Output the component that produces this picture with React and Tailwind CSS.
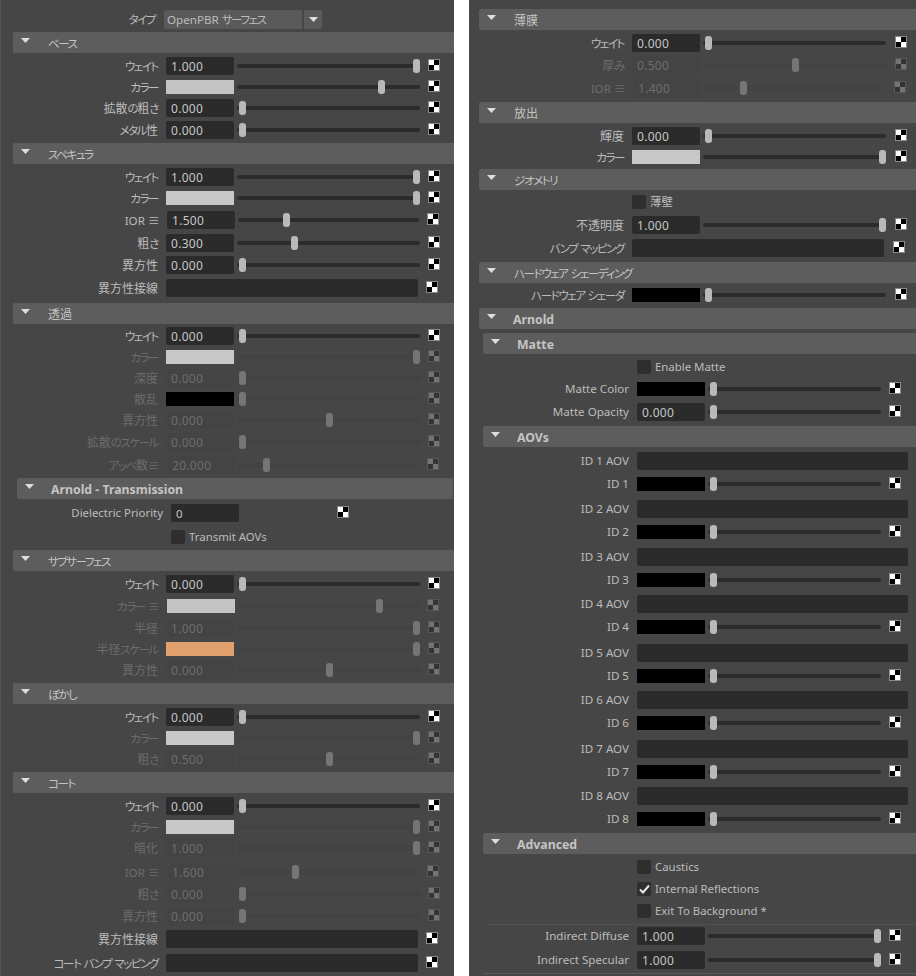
import React from 'react';

const FONT = 'font-["Noto_Sans","Noto_Sans_CJK_JP",sans-serif] [font-feature-settings:"palt"]';

const layouts = {
  left: { label: 'w-[158px]', slider: 183, sliderW: 'w-[183px]', sliderShift: 'w-[181px]', long: 'w-[252px]', check: 'ml-[8px]' },
  right: { label: 'w-[155px]', slider: 183, sliderW: 'w-[183px]', sliderShift: 'w-[181px]', long: 'w-[252px]', check: 'ml-[9px]' },
  arnold: { label: 'w-[160px]', slider: 173, sliderW: 'w-[173px]', sliderShift: 'w-[171px]', long: 'w-[271px]', check: 'ml-[8px]' },
};

// kana and latin runs are narrower than the kanji in the original UI font
const Txt = ({ children }) =>
  String(children)
    .split(/([ぁ-ゖァ-ヿ≡]+|[A-Za-z0-9 -]+)/)
    .filter(Boolean)
    .map((run, i) =>
      /^[ぁ-ゖァ-ヿ≡]/.test(run) ? (
        <span key={i} className="text-[11.5px] tracking-[-1.4px]">{run}</span>
      ) : /^[A-Za-z0-9 -]/.test(run) ? (
        <span key={i} className="text-[11.6px]">{run}</span>
      ) : (
        <span key={i}>{run}</span>
      )
    );

const Triangle = () => (
  <svg width="9" height="5" viewBox="0 0 9 5" className="shrink-0">
    <polygon points="0,0 9,0 4.5,5" fill="#dedede" />
  </svg>
);

const Checker = ({ off }) => (
  <svg width="12" height="12" viewBox="0 0 12 12" className={`shrink-0 mb-[2px] ${off ? 'opacity-25' : ''}`}>
    <rect width="12" height="12" fill="#8a8a8a" />
    <rect x="1" y="1" width="5" height="5" fill="#fff" />
    <rect x="6" y="1" width="5" height="5" fill="#000" />
    <rect x="1" y="6" width="5" height="5" fill="#000" />
    <rect x="6" y="6" width="5" height="5" fill="#fff" />
  </svg>
);

const Header = ({ title, bold, cls = 'ml-[13px]' }) => (
  <div className={`h-[21px] my-[2px] pl-2 flex items-center shrink-0 rounded-tl-[2px] rounded-bl-[2px] bg-[#5d5d5d] text-[#c4c4c4] ${bold ? 'gap-[17px]' : 'gap-[18px]'} ${cls}`}>
    <span className="mb-[5px]"><Triangle /></span>
    {bold ? (
      <span className="pt-[3px] font-bold text-[12.3px]">{title}</span>
    ) : (
      <span className="pt-[2px] text-[12px]"><Txt>{title}</Txt></span>
    )}
  </div>
);

const Slider = ({ v, off, total, width }) => (
  <div className={`relative h-[14px] mb-[1px] flex items-center shrink-0 ${width}`}>
    <div className={`w-full h-[4px] rounded-full ${off ? 'bg-[#434343]' : 'bg-[#2c2c2c]'}`} />
    <div
      className={`absolute top-0 w-[7px] h-[14px] rounded-[3px] ${off ? 'bg-[#757575]' : 'bg-[#b9b9b9]'}`}
      style={{ left: `${2 + v * (total - 9)}px` }}
    />
  </div>
);

const Row = ({ h = 'h-[22px]', layout = 'left', label, val, color, v, off, shift, long, check = true }) => {
  const l = layouts[layout];
  const latin = /^[\x20-\x7e]+$/.test(label);
  return (
    <div className={`flex items-center shrink-0 ${h}`}>
      <div className={`text-right shrink-0 text-[12px] whitespace-nowrap ${latin ? '' : 'pt-px'} ${l.label} ${off ? 'text-[#6c6c6c]' : 'text-[#bcbcbc]'}`}><Txt>{label}</Txt></div>
      <div className={`flex items-center shrink-0 ${shift ? 'ml-[9px]' : 'ml-[8px]'}`}>
        {long ? (
          <div className={`h-[18px] rounded-[2px] bg-[#2b2b2b] ${l.long}`} />
        ) : color ? (
          <div className={`w-[68px] h-[14px] ${color}`} />
        ) : (
          <div className={`w-[68px] h-[18px] rounded-[2px] pl-[5px] pt-px flex items-center text-[12px] tracking-[0.3px] ${off ? 'bg-[#444444] text-[#6e6e6e]' : 'bg-[#2b2b2b] text-[#c6c6c6]'}`}>{val}</div>
        )}
      </div>
      {!long && (
        <div className="ml-[3px]">
          <Slider v={v} off={off} total={shift ? l.slider - 2 : l.slider} width={shift ? l.sliderShift : l.sliderW} />
        </div>
      )}
      {check && <div className={`flex ${l.check}`}><Checker off={off} /></div>}
    </div>
  );
};

const Check = ({ h = 'h-[22px]', ml, label, checked }) => (
  <div className={`flex items-center shrink-0 text-[11.4px] text-[#bcbcbc] ${h} ${ml}`}>
    <div className="w-[14px] h-[14px] rounded-[2px] bg-[#2e2e2e] flex items-center justify-center">
      {checked && (
        <svg width="11" height="10" viewBox="0 0 11 10">
          <path d="M1 5.5 L4 8.5 L10 1.5" fill="none" stroke="#e6e6e6" strokeWidth="2" />
        </svg>
      )}
    </div>
    <span className="ml-[4px]">{label}</span>
  </div>
);

const Aov = ({ n, mt }) => (
  <div className={`flex flex-col shrink-0 ${mt}`}>
    <Row layout="arnold" label={`ID ${n} AOV`} long check={false} />
    <Row layout="arnold" h="h-[24px]" label={`ID ${n}`} color="bg-black" v={0} />
  </div>
);

const GRAY = 'bg-[#c8c8c8]';

const LeftPanel = () => (
  <div className="w-[454px] h-full flex flex-col shrink-0 bg-[#464646] pt-[8px] shadow-[inset_1px_0_0_#555555] overflow-hidden">
    <div className="flex items-center h-[22px] shrink-0 text-[12px] text-[#bcbcbc]">
      <div className="w-[155px] text-right pt-px"><Txt>タイプ</Txt></div>
      <div className="ml-[9px] h-[19px] w-[138px] bg-[#5a5a5a] rounded-l-[2px] pl-[3px] pt-px flex items-center whitespace-pre"><Txt>OpenPBR サーフェス</Txt></div>
      <div className="ml-[2px] h-[19px] w-[18px] bg-[#5a5a5a] rounded-r-[2px] flex items-center justify-center"><Triangle /></div>
    </div>

    <Header title="ベース" />
    <Row label="ウェイト" val="1.000" v={1} />
    <Row h="h-[20px]" label="カラー" color="bg-[#c4c4c4]" v={0.8} />
    <Row label="拡散の粗さ" val="0.000" v={0} />
    <Row label="メタル性" val="0.000" v={0} />

    <Header title="スペキュラ" />
    <Row label="ウェイト" val="1.000" v={1} />
    <Row h="h-[20px]" label="カラー" color={GRAY} v={1} />
    <Row h="h-[24px]" label="IOR ≡" val="1.500" v={0.25} shift />
    <Row label="粗さ" val="0.300" v={0.3} />
    <Row label="異方性" val="0.000" v={0} />
    <Row h="h-[24px]" label="異方性接線" long />
    <div className="h-[1px] shrink-0" />

    <Header title="透過" />
    <Row h="h-[20px]" label="ウェイト" val="0.000" v={0} />
    <Row label="カラー" color={GRAY} v={1} off />
    <Row h="h-[20px]" label="深度" val="0.000" v={0} off />
    <Row label="散乱" color="bg-black" v={0} off />
    <Row h="h-[20px]" label="異方性" val="0.000" v={0.5} off />
    <Row h="h-[24px]" label="拡散のスケール" val="0.000" v={0} off />
    <Row label="アッベ数≡" val="20.000" v={0.135} off shift />

    <Header title="Arnold - Transmission" bold cls="ml-[17px] mr-[1px]" />
    <div className="flex items-center h-[24px] shrink-0 text-[11.4px] text-[#bcbcbc]">
      <div className="w-[163px] text-right">Dielectric Priority</div>
      <div className="ml-[8px] w-[68px] h-[18px] rounded-[2px] bg-[#2b2b2b] text-[#c6c6c6] pl-[5px] pt-px flex items-center">0</div>
      <div className="ml-[98px] flex"><Checker /></div>
    </div>
    <Check h="h-[23px]" ml="ml-[171px]" label="Transmit AOVs" />

    <Header title="サブサーフェス" />
    <Row label="ウェイト" val="0.000" v={0} />
    <Row label="カラー ≡" color="bg-[#c4c4c4]" v={0.79} off shift />
    <Row label="半径" val="1.000" v={1} off />
    <Row h="h-[20px]" label="半径スケール" color="bg-[#e0a16e]" v={1} off />
    <Row label="異方性" val="0.000" v={0.5} off />

    <Header title="ぼかし" />
    <Row label="ウェイト" val="0.000" v={0} />
    <Row h="h-[20px]" label="カラー" color={GRAY} v={1} off />
    <Row label="粗さ" val="0.500" v={0.5} off />

    <Header title="コート" />
    <Row label="ウェイト" val="0.000" v={0} />
    <Row h="h-[20px]" label="カラー" color={GRAY} v={1} off />
    <Row label="暗化" val="1.000" v={1} off />
    <Row h="h-[26px]" label="IOR ≡" val="1.600" v={0.3} off shift />
    <Row h="h-[18px]" label="粗さ" val="0.000" v={0} off />
    <Row h="h-[26px]" label="異方性" val="0.000" v={0} off />
    <Row h="h-[20px]" label="異方性接線" long />
    <Row h="h-[28px]" label="コート バンプ マッピング" long />
  </div>
);

const RightPanel = () => (
  <div className="flex-1 h-full flex flex-col bg-[#464646] pt-[7px] overflow-hidden">
    <Header title="薄膜" cls="ml-[10px]" />
    <Row layout="right" label="ウェイト" val="0.000" v={0} />
    <Row layout="right" label="厚み" val="0.500" v={0.5} off />
    <Row layout="right" h="h-[24px]" label="IOR ≡" val="1.400" v={0.2} off shift />

    <Header title="放出" cls="ml-[10px]" />
    <Row layout="right" label="輝度" val="0.000" v={0} />
    <Row layout="right" h="h-[20px]" label="カラー" color={GRAY} v={1} />

    <Header title="ジオメトリ" cls="ml-[10px]" />
    <Check h="h-[20px]" ml="ml-[163px]" label="薄壁" />
    <Row layout="right" h="h-[26px]" label="不透明度" val="1.000" v={1} />
    <Row layout="right" h="h-[20px]" label="バンプ マッピング" long />
    <div className="h-[2px] shrink-0" />

    <Header title="ハードウェア シェーディング" cls="ml-[10px]" />
    <Row layout="right" h="h-[20px]" label="ハードウェア シェーダ" color="bg-black" v={0} />
    <div className="h-[1px] shrink-0" />

    <Header title="Arnold" bold cls="ml-[10px]" />
    <Header title="Matte" bold cls="ml-[14px]" />
    <Check ml="ml-[168px]" label="Enable Matte" />
    <Row layout="arnold" label="Matte Color" color="bg-black" v={0} />
    <Row layout="arnold" h="h-[24px]" label="Matte Opacity" val="0.000" v={0} />

    <Header title="AOVs" bold cls="ml-[14px]" />
    <Aov n={1} mt="mt-[1px]" />
    <Aov n={2} mt="mt-[2px]" />
    <Aov n={3} mt="mt-[2px]" />
    <Aov n={4} mt="mt-[1px]" />
    <Aov n={5} mt="mt-[3px]" />
    <Aov n={6} mt="mt-[1px]" />
    <Aov n={7} mt="mt-[3px]" />
    <Aov n={8} mt="mt-[1px]" />

    <Header title="Advanced" bold cls="ml-[14px]" />
    <Check ml="ml-[168px]" label="Caustics" />
    <Check ml="ml-[168px]" label="Internal Reflections" checked />
    <Check ml="ml-[168px]" label="Exit To Background *" />
    <div className="h-px mt-[2px] ml-[17px] shrink-0 bg-[#505050]" />
    <Row layout="arnold" label="Indirect Diffuse" val="1.000" v={1} />
    <Row layout="arnold" h="h-[26px]" label="Indirect Specular" val="1.000" v={1} />
    <div className="h-px ml-[14px] shrink-0 bg-[#5a5a5a]" />
  </div>
);

export default function App() {
  return (
    <div className={`w-[916px] h-[976px] flex bg-white overflow-hidden ${FONT}`}>
      <LeftPanel />
      <div className="w-[15px] shrink-0" />
      <RightPanel />
    </div>
  );
}
